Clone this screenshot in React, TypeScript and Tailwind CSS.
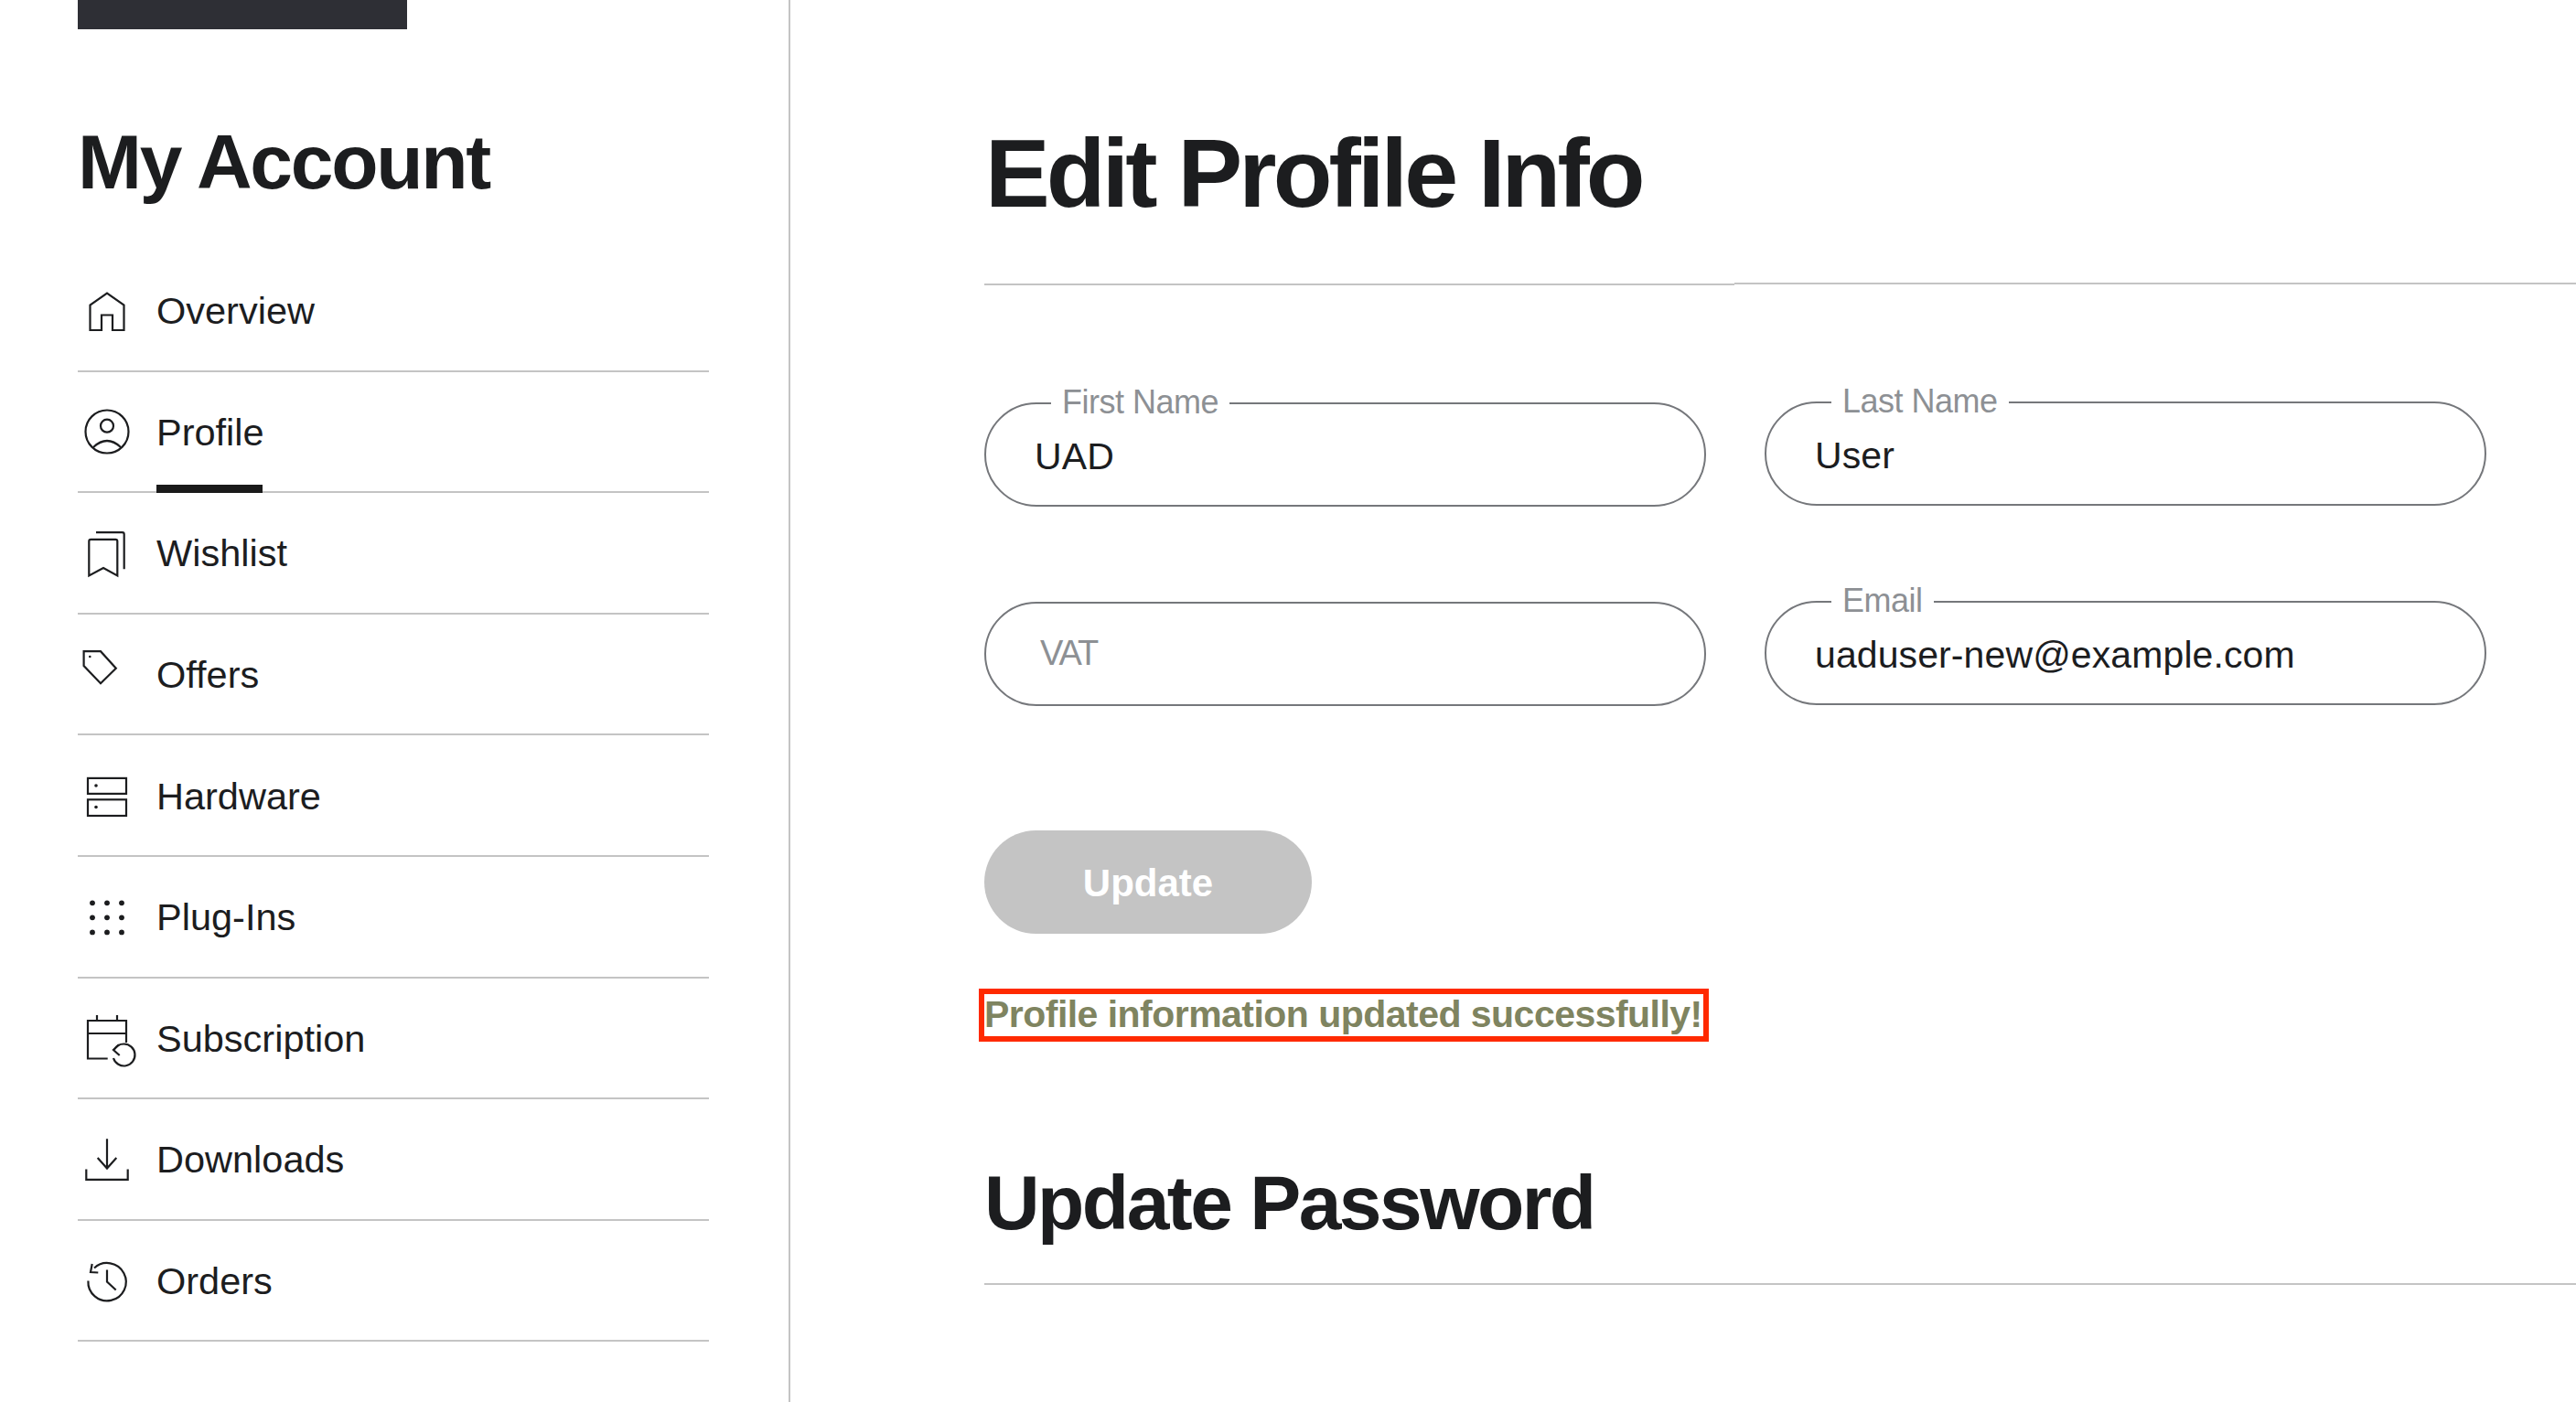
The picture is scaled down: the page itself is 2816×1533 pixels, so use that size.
import type { ReactNode } from 'react';

function Icon({ children }: { children: ReactNode }) {
  return (
    <svg viewBox="0 0 60 60" fill="none" stroke="#1c1d1f" strokeWidth="2.2" className="w-[60px] h-[60px] shrink-0 overflow-visible">
      {children}
    </svg>
  );
}

const navItems: { label: string; active?: boolean; icon: ReactNode }[] = [
  { label: 'Overview', icon: <path d="M11.5 51V23.5L30 10.5l18.500 13V51H36V34.500H24V51Z" /> },
  {
    label: 'Profile',
    active: true,
    icon: (
      <>
        <circle cx="30" cy="30" r="23.5" />
        <circle cx="30" cy="23.700" r="7" />
        <path d="M15 47Q30 33 45 47" />
      </>
    ),
  },
  {
    label: 'Wishlist',
    icon: (
      <>
        <path d="M10.300 54.500V16.800a2 2 0 0 1 2-2h27a2 2 0 0 1 2 2v37.700L26 46Z" />
        <path d="M18 7.200h28.700a2 2 0 0 1 2 2v38" />
      </>
    ),
  },
  {
    label: 'Offers',
    icon: (
      <>
        <path d="M4.600 4.200H23l16.800 18.600L23 39.300 4.600 20Z" />
        <circle cx="11.300" cy="10" r="1.300" fill="#1c1d1f" stroke="none" />
      </>
    ),
  },
  {
    label: 'Hardware',
    icon: (
      <>
        <rect x="9" y="10.900" width="42" height="17" />
        <rect x="9" y="34.300" width="42" height="17.700" />
        <circle cx="18" cy="19" r="1.800" fill="#1c1d1f" stroke="none" />
        <circle cx="18" cy="42.500" r="1.800" fill="#1c1d1f" stroke="none" />
      </>
    ),
  },
  {
    label: 'Plug-Ins',
    icon: (
      <g fill="#1c1d1f" stroke="none">
        {[14, 30, 46].map((x) =>
          [14.3, 30.3, 46.4].map((y) => <circle key={`${x}-${y}`} cx={x} cy={y} r="2.900" />),
        )}
      </g>
    ),
  },
  {
    label: 'Subscription',
    icon: (
      <>
        <path d="M30.700 52.500H9V11h42v24M9 25h42M19 5v6M41 5v6" />
        <path d="M37.500 43C40 38.500 44 36.500 48.500 36.500a12 12 0 1 1-11.500 15.500" />
        <path d="M43 37.400 37 43l6.700 6" />
      </>
    ),
  },
  {
    label: 'Downloads',
    icon: (
      <>
        <path d="M30 7.300v32.200M19.700 28 30 39.500 40.300 28" />
        <path d="M7.300 40.500v11.300h45.400V40.500" />
      </>
    ),
  },
  {
    label: 'Orders',
    icon: (
      <>
        <path d="M16 15.500a20.700 20.700 0 1 1-6.600 14" />
        <path d="M13.700 11 12 20l8.300.5" />
        <path d="M30 17.500v13l9.700 9" />
      </>
    ),
  },
];

function Field({ label, value, placeholder, raised }: { label?: string; value?: string; placeholder?: string; raised?: boolean }) {
  return (
    <div className={`relative h-[114px] rounded-full border-2 border-[#75777b] flex items-center pl-[53px] pt-[4px] ${raised ? 'mt-[-1px]' : ''}`}>
      {label && (
        <span className="absolute left-[71px] top-[-20px] bg-white px-[12px] text-[36px] leading-[36px] tracking-[-0.5px] text-[#8d9094]">
          {label}
        </span>
      )}
      {value && <span className="text-[41px] leading-[46px] tracking-[0.1px] text-[#1c1d1f]">{value}</span>}
      {placeholder && (
        <span className="ml-[6px] mt-[-7px] text-[38px] leading-[44px] tracking-[-2px] text-[#8d9094]">{placeholder}</span>
      )}
    </div>
  );
}

export default function App() {
  return (
    <div className="flex h-[1533px] overflow-hidden bg-white font-['Liberation_Sans',Arial,sans-serif] text-[#1c1d1f]">
      <aside className="w-[864px] shrink-0 border-r-2 border-[#c4c4c4] pl-[85px] pr-[87px]">
        <div className="w-[360px] h-[32px] bg-[#2e2f35]" />
        <h2 className="mt-[103px] text-[84px] leading-[84px] font-bold tracking-[-2.3px]">My Account</h2>
        <nav className="mt-[55px]">
          {navItems.map((item) => (
            <div key={item.label} className="relative flex items-center gap-[24px] h-[132.6px] pl-[2px] pt-[1px] border-b-2 border-[#c4c4c4]">
              <Icon>{item.icon}</Icon>
              <span className="mt-[1px] text-[41.5px] leading-[48px]">{item.label}</span>
              {item.active && <span className="absolute left-[86px] bottom-[-2px] w-[116px] h-[9px] bg-[#1a1a1a]" />}
            </div>
          ))}
        </nav>
      </aside>
      <main className="flex-1 pl-[212px] pt-[136px]">
        <h1 className="ml-[1px] text-[106px] leading-[106px] font-bold tracking-[-3.85px]">Edit Profile Info</h1>
        <div className="mt-[68px] flex items-start">
          <div className="w-[820px] h-[2px] bg-[#c4c4c4]" />
          <div className="flex-1 h-[2px] mt-[-1px] bg-[#c4c4c4]" />
        </div>
        <div className="mt-[128px] grid grid-cols-[789px_789px] gap-x-[64px] gap-y-[104px]">
          <Field label="First Name" value="UAD" />
          <Field label="Last Name" value="User" raised />
          <Field placeholder="VAT" />
          <Field label="Email" value="uaduser-new@example.com" raised />
        </div>
        <button className="mt-[136px] block w-[358px] h-[113px] pt-[2px] rounded-full bg-[#c4c4c4] text-white text-[42px] font-bold">
          Update
        </button>
        <div className="mt-[60px] ml-[-6px] w-[798px] h-[58px] border-[6px] border-[#ff2a00] flex items-center pb-[3px]">
          <span className="text-[41px] leading-[46px] font-bold tracking-[-0.53px] text-[#7f8460] whitespace-nowrap">
            Profile information updated successfully!
          </span>
        </div>
        <h2 className="mt-[135px] text-[84px] leading-[82px] font-bold tracking-[-2.55px]">Update Password</h2>
        <div className="mt-[47px] h-[2px] bg-[#c4c4c4]" />
      </main>
    </div>
  );
}
